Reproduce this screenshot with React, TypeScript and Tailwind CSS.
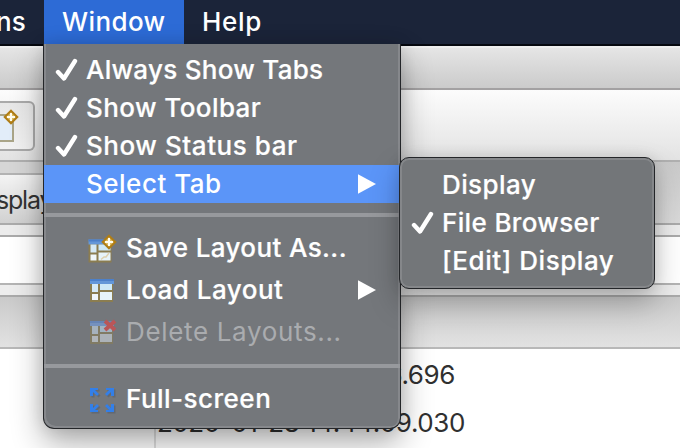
import type { ReactNode } from "react";

function Check({ className = "" }: { className?: string }) {
  return (
    <svg className={className} width="24" height="24" viewBox="0 0 24 24" fill="none">
      <path d="M3 14 L9 20.500 L20 3" stroke="#fff" strokeWidth="4.400" strokeLinecap="round" strokeLinejoin="round" />
    </svg>
  );
}

function Arrow() {
  return (
    <svg className="absolute left-[314px]" width="18" height="20" viewBox="0 0 18 20">
      <path d="M0 0.3 L18 10 L0 19.7 Z" fill="#fff" />
    </svg>
  );
}

function LayoutGrid({ muted = false }: { muted?: boolean }) {
  return (
    <g>
      <rect x="2" y="5" width="23" height="22" fill={muted ? "#817b64" : "#8b7d50"} />
      <rect x="2" y="4" width="24" height="5" fill={muted ? "#7591bd" : "#6497d8"} />
      <rect x="2" y="4" width="24" height="2" fill={muted ? "#6684b5" : "#4c80ca"} />
      <rect x="4" y="9" width="6" height="8" fill={muted ? "#a6b2bd" : "#d6eaf5"} />
      <rect x="12" y="9" width="12" height="6" fill={muted ? "#a2b4c3" : "#cde8f7"} />
      <rect x="4" y="19" width="6" height="6" fill={muted ? "#b0b5b9" : "#f0f7fa"} />
      <rect x="12" y="17" width="12" height="8" fill={muted ? "#acb2b8" : "#e7f4fa"} />
    </g>
  );
}

function Diamond({ x, y }: { x: number; y: number }) {
  return (
    <g transform={`translate(${x} ${y})`}>
      <path d="M0 -6.300 L6.300 0 L0 6.300 L-6.300 0 Z" fill="#dfbd62" stroke="#af7d16" strokeWidth="2" />
      <path d="M0 -4 V4 M-4 0 H4" stroke="#fffdf0" strokeWidth="2" />
    </g>
  );
}

function SaveIcon() {
  return (
    <svg width="30" height="30" viewBox="0 0 30 30">
      <g transform="translate(-1.500 2.500)"><LayoutGrid /></g>
      <path d="M13 26.500 L16 24 H18 L21 20" fill="none" stroke="#dfd1b0" strokeWidth="1.500" />
      <Diamond x={21} y={9} />
    </svg>
  );
}

function LoadIcon() {
  return <svg width="30" height="30" viewBox="0 0 30 30"><LayoutGrid /></svg>;
}

function DeleteIcon() {
  return (
    <svg width="30" height="30" viewBox="0 0 30 30">
      <LayoutGrid muted />
      <path d="M17 4 L27 13 M27 4 L17 13" stroke="#ba5658" strokeWidth="4" />
    </svg>
  );
}

function FullScreenIcon() {
  const corner = "M0 0 H8 V2 H5 L9 6 L7 8 L3 4 V8 H0 Z";
  return (
    <svg width="30" height="30" viewBox="0 0 30 30">
      {["#626972", "#337fe8"].map((color, i) => (
        <g key={color} fill={color} transform={i ? "translate(2 4)" : "translate(3.500 5.500)"}>
          <path d={corner} />
          <path d={corner} transform="translate(24 0) scale(-1 1)" />
          <path d={corner} transform="translate(0 24) scale(1 -1)" />
          <path d={corner} transform="translate(24 24) scale(-1 -1)" />
        </g>
      ))}
    </svg>
  );
}

type ItemProps = {
  label: string;
  spacing: string;
  checked?: boolean;
  selected?: boolean;
  arrow?: boolean;
  icon?: ReactNode;
  disabled?: boolean;
  height?: string;
};

function Item({ label, spacing, checked, selected, arrow, icon, disabled, height = "h-[38px]" }: ItemProps) {
  return (
    <div className={`relative flex shrink-0 items-center ${height} ${selected ? "bg-[#5b95f8]" : ""}`}>
      <div className="flex w-[42px] shrink-0 pl-[11px]">{checked && <Check />}</div>
      {icon && <div className="w-10 shrink-0 pl-[2px]">{icon}</div>}
      <span className={`whitespace-nowrap ${disabled ? "font-normal text-[#aaacaf]" : selected ? "font-medium text-white" : "font-medium text-white [-webkit-text-stroke:0.2px_white]"} ${spacing}`}>{label}</span>
      {arrow && <Arrow />}
    </div>
  );
}

export default function App() {
  return (
    <div className="relative h-[448px] w-[680px] overflow-hidden bg-white font-['Inter','Liberation_Sans',sans-serif] text-[26px] leading-[38px]">
      <header className="flex h-[46px] border-b-2 border-[#05080f] bg-[#1b2439] font-medium text-white">
        <span className="w-11 pt-[3px]"><span className="-ml-[4px]">ns</span></span>
        <span className="w-[140px] bg-[#2d6bd6] pt-[3px] pl-[18px] tracking-[0.4px]">Window</span>
        <span className="pt-[3px] pl-[18px] tracking-[0.7px]">Help</span>
      </header>
      <div className="h-11 border-t-2 border-b-2 border-t-[#eeeeee] border-b-[#a3a1a2] bg-linear-to-b from-[#e5e5e5] to-[#cbcbcb]" />
      <div className="h-[72px] border-b-2 border-[#b0b0b0] bg-linear-to-b from-[#fcfcfc] to-[#e3e3e3] pt-[11px]">
        <div className="flex h-[50px] w-[35px] items-center rounded-r-[6px] border-2 border-l-0 border-[#aaaaaa] bg-linear-to-b from-[#e7e7e7] to-[#f2f2f2]">
          <svg width="24" height="40" viewBox="0 0 24 40">
            <rect x="-4" y="9" width="17" height="26" fill="#e2edf9" stroke="#aaa588" strokeWidth="2" />
            <Diamond x={11} y={11} />
          </svg>
        </div>
      </div>
      <div className="h-[63px] border-b-2 border-[#ababab] bg-linear-to-b from-[#c9c9c9] to-[#dadada]">
        <div className="h-[61px] w-[150px] bg-[#d6d6d6] pt-[11px]">
          <div className="h-[50px] border-t-2 border-[#b3b3b3] bg-linear-to-b from-[#f4f4f4] to-[#d1d1d1] pt-[6px] text-[25px] tracking-[-1.2px] text-[#333]">
            <span className="-ml-[4px]">splay</span>
          </div>
        </div>
      </div>
      <div className="h-3 border-b-2 border-[#aaaaaa] bg-[#ececec]" />
      <div className="h-12 border-b-2 border-[#b4b4b4] bg-white" />
      <div className="h-3 border-b-2 border-[#aaaaaa] bg-[#ededed]" />
      <div className="h-[52px] border-b-2 border-[#b8b8b8] bg-linear-to-b from-[#cacaca] to-[#e2e2e2]" />
      <div className="h-[99px] pl-[154px]">
        <div className="h-full border-l-2 border-[#dfdfdf] pl-[6px] pt-[2px] leading-[48px] tracking-[-0.4px] text-[#303030]">
          <div className="flex w-[293px] justify-end whitespace-nowrap">2020-01-28 14:38:36.696</div>
          <div className="flex w-[303px] justify-end whitespace-nowrap">2020-01-28 14:44:09.030</div>
        </div>
      </div>

      <div className="absolute left-[43px] top-[44px] h-[385px] w-[358px] rounded-b-[11px] shadow-[0_14px_32px_rgba(0,0,0,.32),0_0_16px_rgba(0,0,0,.12)]" />
      <nav className="absolute left-[43px] top-[44px] flex h-[385px] w-[358px] flex-col rounded-b-[11px] border border-t-0 border-[#242629] bg-[#74777b] pt-[7px] shadow-[inset_2px_-2px_0_rgba(255,255,255,.13),inset_-2px_0_0_rgba(255,255,255,.13)]">
        <Item label="Always Show Tabs" spacing="tracking-[0.28px]" checked />
        <Item label="Show Toolbar" spacing="tracking-[0.42px]" checked />
        <Item label="Show Status bar" spacing="tracking-[0.55px]" checked />
        <Item label="Select Tab" spacing="tracking-[0.5px]" selected arrow />
        <div className="mt-[10px] mb-[10px] h-1 shrink-0 bg-[#97999d]" />
        <Item label="Save Layout As..." spacing="tracking-[0.38px]" icon={<SaveIcon />} height="h-[42px]" />
        <Item label="Load Layout" spacing="tracking-[0.48px]" icon={<LoadIcon />} height="h-[42px]" arrow />
        <Item label="Delete Layouts..." spacing="tracking-[0.66px]" icon={<DeleteIcon />} height="h-[42px]" disabled />
        <div className="mt-[11px] mb-[10px] h-1 shrink-0 bg-[#97999d]" />
        <Item label="Full-screen" spacing="tracking-[0.48px]" icon={<FullScreenIcon />} height="h-[42px]" />
      </nav>

      <nav className="absolute left-[399px] top-[157px] flex h-[132px] w-[256px] flex-col rounded-[10px] border border-[#242629] bg-[#737679] pt-[8px] shadow-[inset_0_0_0_2px_rgba(255,255,255,.13),0_14px_30px_rgba(0,0,0,.26),0_0_14px_rgba(0,0,0,.1)]">
        <Item label="Display" spacing="tracking-[0.4px]" />
        <Item label="File Browser" spacing="tracking-[0.35px]" checked />
        <Item label="[Edit] Display" spacing="tracking-[0.55px]" />
      </nav>
    </div>
  );
}
